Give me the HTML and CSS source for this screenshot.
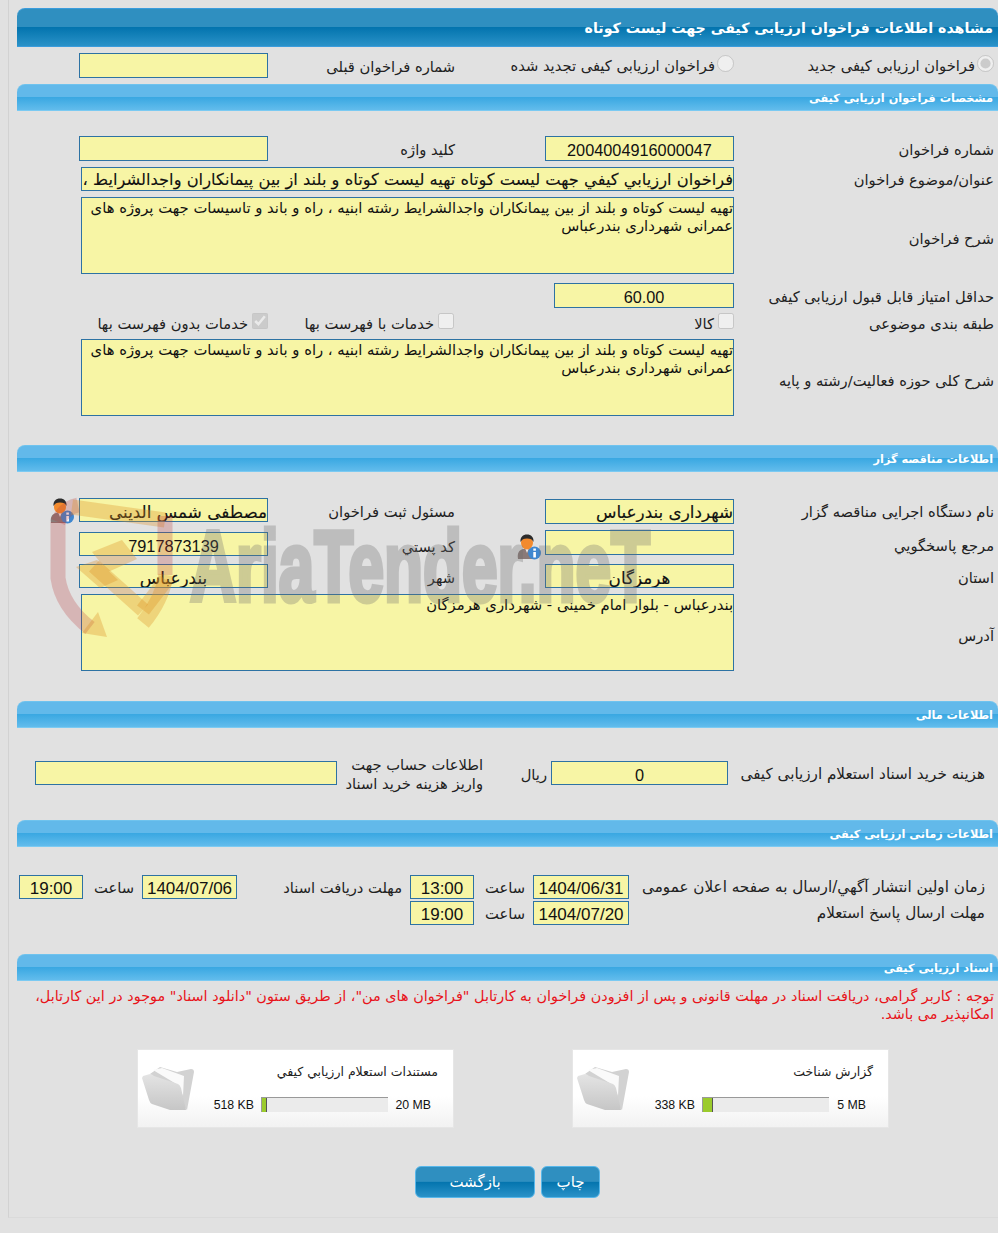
FILE: index.html
```html
<!DOCTYPE html>
<html lang="fa" dir="rtl">
<head>
<meta charset="utf-8">
<title>مشاهده اطلاعات فراخوان</title>
<link rel="stylesheet" href="styles.css">
</head>
<body>
<svg width="0" height="0" class="defs">
  <defs>
    <symbol id="user" viewBox="0 0 26 26">
      <path d="M2 25c-1-6 1-9 5-10l4-1 4 1c4 1 5 4 5 10z" fill="#8a7a78"/>
      <path d="M9 14l2 5 2-5z" fill="#eee"/>
      <ellipse cx="11" cy="9" rx="6" ry="6.5" fill="#f28a2e"/>
      <path d="M4.5 8C4 3 7 .5 11 .5s7 2.500 6.500 7.500c-1-2.500-3-3.500-6.500-3.500S6 5.500 4.500 8z" fill="#2b2b2b"/>
      <circle cx="18.500" cy="19" r="6.500" fill="#3f87cf"/>
      <rect x="17.300" y="18" width="2.600" height="5.500" fill="#fff"/>
      <rect x="17.300" y="14.500" width="2.600" height="2.200" fill="#fff"/>
    </symbol>
    <linearGradient id="fold" x1="0" y1="0" x2="0" y2="1">
      <stop offset="0" stop-color="#e4e4e4"/>
      <stop offset="1" stop-color="#c6c6c6"/>
    </linearGradient>
    <symbol id="folder" viewBox="0 0 52 46">
      <path d="M8 8 18 1l17 5 14-3q3 0 3 3l-7 38z" fill="#d2d2d2"/>
      <path d="M11 4l9-2 22 8-1 20-5-11z" fill="#fafafa"/>
      <path d="M1 10l7-2q2 0 4 2l24 8q2 1 3 4l5 22-16 0L10 38q-2-1-3-4L0 12z" fill="url(#fold)"/>
    </symbol>
  </defs>
</svg>

<div class="page">
  <h1 class="bar bar-main">مشاهده اطلاعات فراخوان ارزیابی کیفی جهت لیست کوتاه</h1>

  <div class="row mt6 h25">
    <label class="opt pr4"><input type="radio" checked disabled>فراخوان ارزیابی کیفی جدید</label>
    <label class="opt"><input type="radio" disabled>فراخوان ارزیابی کیفی تجدید شده</label>
    <div class="lbl pr90">شماره فراخوان قبلی</div>
    <div class="field"></div>
  </div>

  <h2 class="bar bar-sec mt6">مشخصات فراخوان ارزیابی کیفی</h2>

  <div class="row mt25 h25">
    <div class="lbl pr4">شماره فراخوان</div>
    <div class="field center">2004004916000047</div>
    <div class="lbl pr90">کلید واژه</div>
    <div class="field"></div>
  </div>
  <div class="row mt6 h24">
    <div class="lbl pr4 tight">عنوان/موضوع فراخوان</div>
    <div class="field wide single">فراخوان ارزيابي كيفي جهت ليست كوتاه تهيه ليست كوتاه و بلند از بين پيمانكاران واجدالشرايط ،</div>
  </div>
  <div class="row mt6 h77">
    <div class="lbl pr4 tall">شرح فراخوان</div>
    <div class="field wide area">تهیه لیست کوتاه و بلند از بین پیمانکاران واجدالشرایط رشته ابنیه ، راه و باند و تاسیسات جهت پروژه های<br>عمرانی شهرداری بندرعباس</div>
  </div>
  <div class="row mt9 h25">
    <div class="lbl pr4">حداقل امتیاز قابل قبول ارزیابی کیفی</div>
    <div class="field center score">60.00</div>
  </div>
  <div class="row mt5 h20">
    <div class="lbl pr4 low">طبقه بندی موضوعی</div>
    <label class="opt"><input type="checkbox" disabled>کالا</label>
    <label class="opt pr91"><input type="checkbox" disabled>خدمات با فهرست بها</label>
    <label class="opt"><input type="checkbox" checked disabled>خدمات بدون فهرست بها</label>
  </div>
  <div class="row mt6 h77">
    <div class="lbl pr4 tall">شرح کلی حوزه فعالیت/رشته و پایه</div>
    <div class="field wide area">تهیه لیست کوتاه و بلند از بین پیمانکاران واجدالشرایط رشته ابنیه ، راه و باند و تاسیسات جهت پروژه های<br>عمرانی شهرداری بندرعباس</div>
  </div>

  <h2 class="bar bar-sec mt29">اطلاعات مناقصه گزار</h2>

  <div class="row mt26 h25">
    <div class="lbl pr4 tight">نام دستگاه اجرایی مناقصه گزار</div>
    <div class="field strong nudge-down">شهرداری بندرعباس</div>
    <div class="lbl pr90 tight">مسئول ثبت فراخوان</div>
    <div class="field strong short">مصطفی شمس الدینی</div>
    <svg class="user" width="26" height="26"><use href="#user"/></svg>
  </div>
  <div class="row mt7 h26">
    <div class="lbl pr4 tight">مرجع پاسخگویي</div>
    <div class="field short-b"></div>
    <div class="lbl-icon">
      <svg class="user-inline" width="26" height="26"><use href="#user"/></svg>
      <div class="lbl">کد پستي</div>
    </div>
    <div class="field center short push">7917873139</div>
  </div>
  <div class="row mt8 h24">
    <div class="lbl pr4">استان</div>
    <div class="field center strong">هرمزگان</div>
    <div class="lbl pr90">شهر</div>
    <div class="field center strong">بندرعباس</div>
  </div>
  <div class="row mt6 h77">
    <div class="lbl pr4 tall">آدرس</div>
    <div class="field wide area">بندرعباس - بلوار امام خمینی - شهرداری هرمزگان</div>
  </div>

  <h2 class="bar bar-sec mt30">اطلاعات مالی</h2>

  <div class="money mt33">
    <div class="lbl pr13">هزینه خرید اسناد استعلام ارزیابی کیفی</div>
    <div class="field center">0</div>
    <div class="lbl pr4">ریال</div>
    <div class="lbl two-line">اطلاعات حساب جهت<br>واریز هزینه خرید اسناد</div>
    <div class="field"></div>
  </div>

  <h2 class="bar bar-sec mt35">اطلاعات زمانی ارزیابی کیفی</h2>

  <div class="dates mt28">
    <div class="lbl pr13">زمان اولین انتشار آگهي/ارسال به صفحه اعلان عمومی</div>
    <div class="field center stamp">1404/06/31</div>
    <div class="lbl pr8">ساعت</div>
    <div class="field center stamp">13:00</div>
    <div class="lbl pr8">مهلت دریافت اسناد</div>
    <div class="field center stamp">1404/07/06</div>
    <div class="lbl pr8">ساعت</div>
    <div class="field center stamp">19:00</div>
  </div>
  <div class="dates mt2">
    <div class="lbl pr13">مهلت ارسال پاسخ استعلام</div>
    <div class="field center stamp">1404/07/20</div>
    <div class="lbl pr8">ساعت</div>
    <div class="field center stamp">19:00</div>
  </div>

  <h2 class="bar bar-sec mt29">اسناد ارزیابی کیفی</h2>

  <p class="notice">توجه : کاربر گرامی، دریافت اسناد در مهلت قانونی و پس از افزودن فراخوان به کارتابل "فراخوان های من"، از طریق ستون "دانلود اسناد" موجود در این کارتابل،<br>امکانپذیر می باشد.</p>

  <div class="cards">
    <div class="card">
      <div class="card-info">
        <div class="card-title">گزارش شناخت</div>
        <div class="usage">
          <span class="size max" dir="ltr">5 MB</span>
          <span class="meter" dir="ltr"><span class="meter-fill f10"></span></span>
          <span class="size used" dir="ltr">338 KB</span>
        </div>
      </div>
      <svg class="folder" width="52" height="46"><use href="#folder"/></svg>
    </div>
    <div class="card">
      <div class="card-info">
        <div class="card-title">مستندات استعلام ارزیابي کیفي</div>
        <div class="usage">
          <span class="size max max-wide" dir="ltr">20 MB</span>
          <span class="meter" dir="ltr"><span class="meter-fill f5"></span></span>
          <span class="size used" dir="ltr">518 KB</span>
        </div>
      </div>
      <svg class="folder" width="52" height="46"><use href="#folder"/></svg>
    </div>
  </div>

  <div class="actions">
    <button class="btn btn-print" type="button">چاپ</button>
    <button class="btn btn-back" type="button">بازگشت</button>
  </div>
</div>

<svg class="watermark" width="998" height="700" viewBox="0 0 998 700" aria-hidden="true">
  <g fill="none" stroke-width="15">
    <path d="M58 522V578Q62 606 90 628" stroke="#b93a3a" opacity=".26"/>
    <path d="M58 522Q64 508 78 505" stroke="#b93a3a" opacity=".26"/>
    <path d="M72 507 165 520" stroke="#dc8f22" opacity=".32"/>
    <path d="M165 516V575" stroke="#b93a3a" opacity=".26"/>
    <path d="M166 575Q162 600 143 623" stroke="#dc8f22" opacity=".32"/>
    <path d="M94 566 143 610" stroke="#dc8f22" opacity=".32"/>
    <path d="M143 610 166 580" stroke="#dc8f22" opacity=".32"/>
  </g>
  <g fill="#dc8f22" opacity=".32">
    <polygon points="76,567 97,560 118,580 100,588"/>
    <polygon points="92,552 122,540 137,559 108,572"/>
    <polygon points="98,612 107,637 82,633"/>
  </g>
  <text class="wm-text" x="190" y="601" textLength="460" lengthAdjust="spacingAndGlyphs">AriaTender.neT</text>
</svg>
</body>
</html>
```

FILE: styles.css
```css
* { box-sizing: border-box; }

html, body { margin: 0; height: 1233px; overflow: hidden; }

body {
  position: relative;
  background: #e1e1e1;
  font-family: "DejaVu Sans", "Liberation Sans", sans-serif;
  font-size: 14.700px;
  color: #222;
}

.defs { position: absolute; }

.page {
  margin-left: 8px;
  height: 1218px;
  padding-top: 8px;
  border-left: 1px solid #d2d2d2;
  border-bottom: 1px solid #dadada;
}

.bar {
  margin-right: 0;
  margin-bottom: 0;
  margin-left: 8px;
  padding-right: 5px;
  color: #fff;
  font-weight: bold;
  border-radius: 8px 8px 0 0;
  display: flex;
  align-items: center;
}

.bar-main {
  margin-top: 0;
  height: 39px;
  font-size: 14.200px;
  border-top: 1px solid #3a9cdc;
  border-bottom: 1px solid #3a9cdc;
  background: linear-gradient(#2f8fc0 0, #2f8fc0 48%, #0374ae 50%, #2a92c8 100%);
}

.bar-sec {
  height: 27px;
  padding-top: 1px;
  font-size: 11.300px;
  border-top: 1px solid #6fc3ee;
  border-bottom: 1px solid #7bcaf2;
  background: linear-gradient(#62b9ea 0, #62b9ea 48%, #3aa8e2 50%, #62bcec 100%);
}

.row {
  display: grid;
  grid-template-columns: 264px 189px 277px 189px 1fr;
  align-items: stretch;
}

.h20 { height: 20px; }
.h24 { height: 24px; }
.h25 { height: 25px; }
.h26 { height: 26px; }
.h77 { height: 77px; }

.mt2 { margin-top: 2px; }
.mt5 { margin-top: 5px; }
.mt6 { margin-top: 6px; }
.mt7 { margin-top: 7px; }
.mt8 { margin-top: 8px; }
.mt9 { margin-top: 9px; }
.mt25 { margin-top: 25px; }
.mt26 { margin-top: 26px; }
.mt28 { margin-top: 28px; }
.mt29 { margin-top: 29px; }
.mt30 { margin-top: 30px; }
.mt33 { margin-top: 33px; }
.mt35 { margin-top: 35px; }

.pr4 { padding-right: 4px; }
.pr8 { padding-right: 8px; }
.pr13 { padding-right: 13px; font-size: 15.200px; }
.pr90 { padding-right: 90px; }
.pr91 { padding-right: 91px; }

.lbl {
  display: flex;
  align-items: center;
  padding-top: 2px;
  white-space: nowrap;
}

.low { padding-top: 0; }
.tight { padding-top: 0; }
.tall { padding-top: 5px; }
.dates .lbl { padding-top: 0; }

.two-line {
  display: block;
  padding-top: 0;
  line-height: 19px;
  margin-top: -6px;
}

.opt {
  display: flex;
  align-items: center;
  white-space: nowrap;
}

.opt input {
  width: 16px;
  height: 16px;
  margin: 0 0 4px 4px;
  flex: none;
}

.opt input[type="radio"] {
  width: 17px;
  height: 17px;
  margin-left: 2px;
}

.field {
  border: 1px solid #2d72a3;
  background: #f7f5a5;
  color: #111;
  font-size: 15px;
  line-height: 22px;
  overflow: hidden;
  white-space: nowrap;
}

.center {
  text-align: center;
  font-family: "Liberation Sans", "DejaVu Sans", sans-serif;
  font-size: 16.300px;
  padding-top: 2px;
}

.stamp { font-size: 17px; }

.strong {
  font-family: "DejaVu Sans", sans-serif;
  font-size: 16.800px;
  -webkit-text-stroke: .15px #111;
  padding-top: 1px;
}

.center.strong { padding-top: 2px; }
.short.strong { padding-top: 2px; }

.wide { grid-column: 2 / 5; margin-left: 2px; }

.single { font-size: 16.300px; padding-top: 1px; -webkit-text-stroke: .1px #111; }

.area {
  white-space: normal;
  font-size: 14.800px;
  line-height: 18px;
  padding-top: 1px;
}

.score { grid-column: 2; width: 180px; }

.short { height: 24px; }
.short-b { height: 25px; }
.push { margin-top: 2px; }
.nudge-down { margin-top: 1px; height: 25px; }

.user, .user-inline { flex: none; }
.user { margin: 0 4px 0 0; }

.lbl-icon {
  display: flex;
  align-items: center;
}

.user-inline { margin: 4px 3px 0 0; }
.lbl-icon .lbl { margin-right: 61px; padding-top: 2px; }

.money {
  display: grid;
  grid-template-columns: 270px 177px 68px 146px 302px;
  grid-template-rows: 24px;
}

.dates {
  display: grid;
  grid-template-columns: 369px 96px 59px 64px 173px 95px 59px 64px;
  grid-template-rows: 24px;
}

.notice {
  margin: 6px 4px 0 0;
  color: #e8131a;
  font-size: 14.400px;
  line-height: 18px;
  white-space: nowrap;
}

.cards {
  display: flex;
  gap: 118px;
  margin-top: 26px;
  padding-right: 109px;
}

.card {
  display: flex;
  width: 317px;
  height: 79px;
  border: 1px solid #e6e6e6;
  background: linear-gradient(#fff 0, #fff 60%, #f2f2f2 100%);
}

.card-info { flex: 1; padding: 13px 15px 0 0; }

.card-title { font-size: 12.500px; line-height: 18px; white-space: nowrap; }

.usage {
  display: flex;
  align-items: center;
  margin-top: 16px;
  padding-right: 7px;
}

.size {
  font-family: "Liberation Sans", sans-serif;
  font-size: 12.300px;
  color: #111;
}

.size.max { width: 37px; text-align: right; }
.size.max-wide { width: 43px; }
.size.used { margin-right: 7px; }

.meter {
  display: block;
  width: 127px;
  height: 15px;
  background: #ebebeb;
  border-top: 1px solid #999;
  border-left: 1px solid #999;
}

.meter-fill {
  display: block;
  height: 14px;
  background: #9bcb2c;
  border-right: 1px solid #555;
}

.f5 { width: 5px; }
.f10 { width: 10px; }

.folder { flex: none; margin: 16px 0 0 4px; }

.actions {
  display: flex;
  gap: 6px;
  margin-top: 38px;
  padding-right: 398px;
}

.btn {
  height: 32px;
  padding: 0;
  border: 1px solid #58b7ea;
  border-radius: 6px;
  color: #fff;
  font-family: "DejaVu Sans", sans-serif;
  font-size: 15px;
  background: linear-gradient(#2f8fc0 0, #2f8fc0 48%, #0374ae 50%, #2a92c8 100%);
}

.btn-print { width: 59px; }
.btn-back { width: 120px; }

.watermark {
  position: absolute;
  left: 0;
  top: 0;
  pointer-events: none;
  direction: ltr;
}

.wm-text {
  direction: ltr;
  unicode-bidi: isolate;
  font-family: "Liberation Sans Narrow", "Liberation Sans", sans-serif;
  font-weight: bold;
  font-size: 100px;
  fill: #6e6e6e;
  stroke: #6e6e6e;
  stroke-width: 5px;
  opacity: .3;
}
```
